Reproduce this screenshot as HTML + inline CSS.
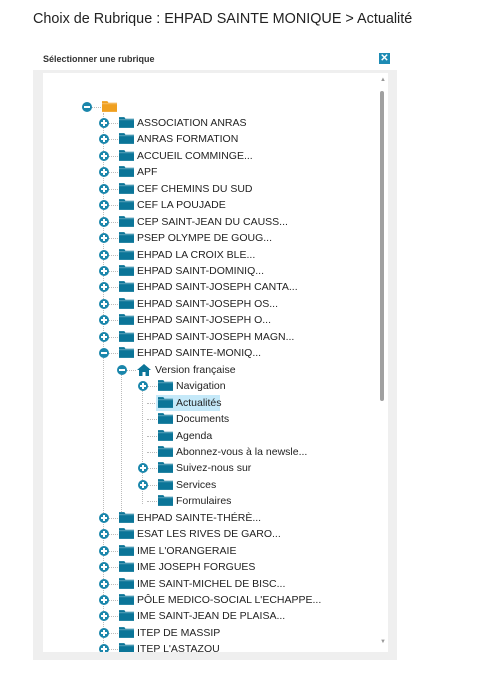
<!DOCTYPE html><html><head><meta charset="utf-8"><style>
body{margin:0;width:499px;height:693px;background:#fff;font-family:"Liberation Sans",Arial,sans-serif;position:relative;overflow:hidden}
.t{position:absolute;left:33px;top:11px;font-size:14.4px;color:#222}
.dlg{position:absolute;left:33px;top:46px;width:364px;height:614px;background:#efefef}
.hd{position:absolute;left:0;top:0;width:364px;height:24px;background:#fff;font-size:9px;font-weight:bold;color:#333}
.hd span{position:absolute;left:10px;top:8px}
.x{position:absolute;left:346px;top:7px;width:11px;height:11px;background:#1d8bb4;color:#fff;font-size:10px;line-height:11px;text-align:center;font-weight:bold}
.pn{position:absolute;left:43px;top:73px;width:345px;height:579px;background:#fff;overflow:hidden}
.sb{position:absolute;left:337px;top:18px;width:4px;height:310px;background:#a0a0a0;border-radius:2px}
.r{position:absolute;height:16px;font-size:10.5px;color:#222;white-space:nowrap;line-height:16px}
.tg{position:absolute;width:10px;height:10px;border-radius:50%;background:#1a86ab;top:3px}
.tg:before{content:"";position:absolute;left:2px;top:4px;width:6px;height:2px;background:#fff}
.tg.p:after{content:"";position:absolute;left:4px;top:2px;width:2px;height:6px;background:#fff}
.f{position:absolute;top:2px;width:15px;height:11px}
.v{position:absolute;border-left:1px dotted #bbb}
.h{position:absolute;border-top:1px dotted #bbb;width:10px;top:8px}
</style></head><body>
<div class="t">Choix de Rubrique : EHPAD SAINTE MONIQUE &gt; Actualité</div>
<div class="dlg"><div class="hd"><span>Sélectionner une rubrique</span><div class="x">✕</div></div></div>
<div class="pn" id="p"><div class="sb"></div>
<div style="position:absolute;left:337px;top:4px;font-size:6px;color:#999">▲</div>
<div style="position:absolute;left:337px;top:566px;font-size:6px;color:#999">▼</div>
</div>
<script>
var p=document.getElementById('p');
var F='<svg viewBox="0 0 14 10" width="15" height="11"><path d="M0 0H5L6 1.5H14V10H0Z" fill="C"/><path d="M0 2.5H14" stroke="#fff" stroke-width=".6" opacity=".5"/></svg>';
var H='<svg viewBox="0 0 14 12" width="14" height="12"><path d="M7 0L0 6H2V12H5.5V8H8.5V12H12V6H14Z" fill="#0b7598"/></svg>';
var rows=[["",0,"m","o"],["ASSOCIATION ANRAS",1,"p"],["ANRAS FORMATION",1,"p"],["ACCUEIL COMMINGE...",1,"p"],["APF",1,"p"],["CEF CHEMINS DU SUD",1,"p"],["CEF LA POUJADE",1,"p"],["CEP SAINT-JEAN DU CAUSS...",1,"p"],["PSEP OLYMPE DE GOUG...",1,"p"],["EHPAD LA CROIX BLE...",1,"p"],["EHPAD SAINT-DOMINIQ...",1,"p"],["EHPAD SAINT-JOSEPH CANTA...",1,"p"],["EHPAD SAINT-JOSEPH OS...",1,"p"],["EHPAD SAINT-JOSEPH O...",1,"p"],["EHPAD SAINT-JOSEPH MAGN...",1,"p"],["EHPAD SAINTE-MONIQ...",1,"m"],["Version française",2,"m","h"],["Navigation",3,"p"],["Actualités",3,"","s"],["Documents",3,""],["Agenda",3,""],["Abonnez-vous à la newsle...",3,""],["Suivez-nous sur",3,"p"],["Services",3,"p"],["Formulaires",3,""],["EHPAD SAINTE-THÉRÈ...",1,"p"],["ESAT LES RIVES DE GARO...",1,"p"],["IME L'ORANGERAIE",1,"p"],["IME JOSEPH FORGUES",1,"p"],["IME SAINT-MICHEL DE BISC...",1,"p"],["PÔLE MEDICO-SOCIAL L'ECHAPPE...",1,"p"],["IME SAINT-JEAN DE PLAISA...",1,"p"],["ITEP DE MASSIP",1,"p"],["ITEP L'ASTAZOU",1,"p"]];
var lx=[44,61,79,100],h='',Y0=25.5;
h+='<div class="v" style="left:'+(lx[1]-1)+'px;top:40px;height:560px"></div>';
h+='<div class="v" style="left:'+(lx[2]-1)+'px;top:295px;height:150px"></div>';
h+='<div class="v" style="left:'+(lx[3]-1)+'px;top:311px;height:120px"></div>';
rows.forEach(function(r,i){
 var y=Math.round(Y0+i*16.45),x=lx[r[1]];
 var s='<div class="h" style="left:'+(x+4)+'px"></div>';
 if(r[2])s+='<div class="tg'+(r[2]=='p'?' p':'')+'" style="left:'+(x-5)+'px"></div>';
 var ic=r[3]=='h'?H:F.replace('C',r[3]=='o'?'#f0a020':'#0b7598');
 if(r[3]=='s')s+='<div style="position:absolute;left:'+(x+13)+'px;top:0;width:64px;height:16px;background:#c5e9f9"></div>';
 s+='<div class="f" style="left:'+(x+15)+'px'+(r[3]=='h'?';top:2px':'')+'">'+ic+'</div>';
 s+='<span style="position:absolute;left:'+(x+33)+'px;top:0">'+r[0]+'</span>';
 h+='<div class="r" style="left:0;top:'+y+'px;width:330px">'+s+'</div>';
});
p.insertAdjacentHTML('beforeend',h);
</script>
</body></html>
